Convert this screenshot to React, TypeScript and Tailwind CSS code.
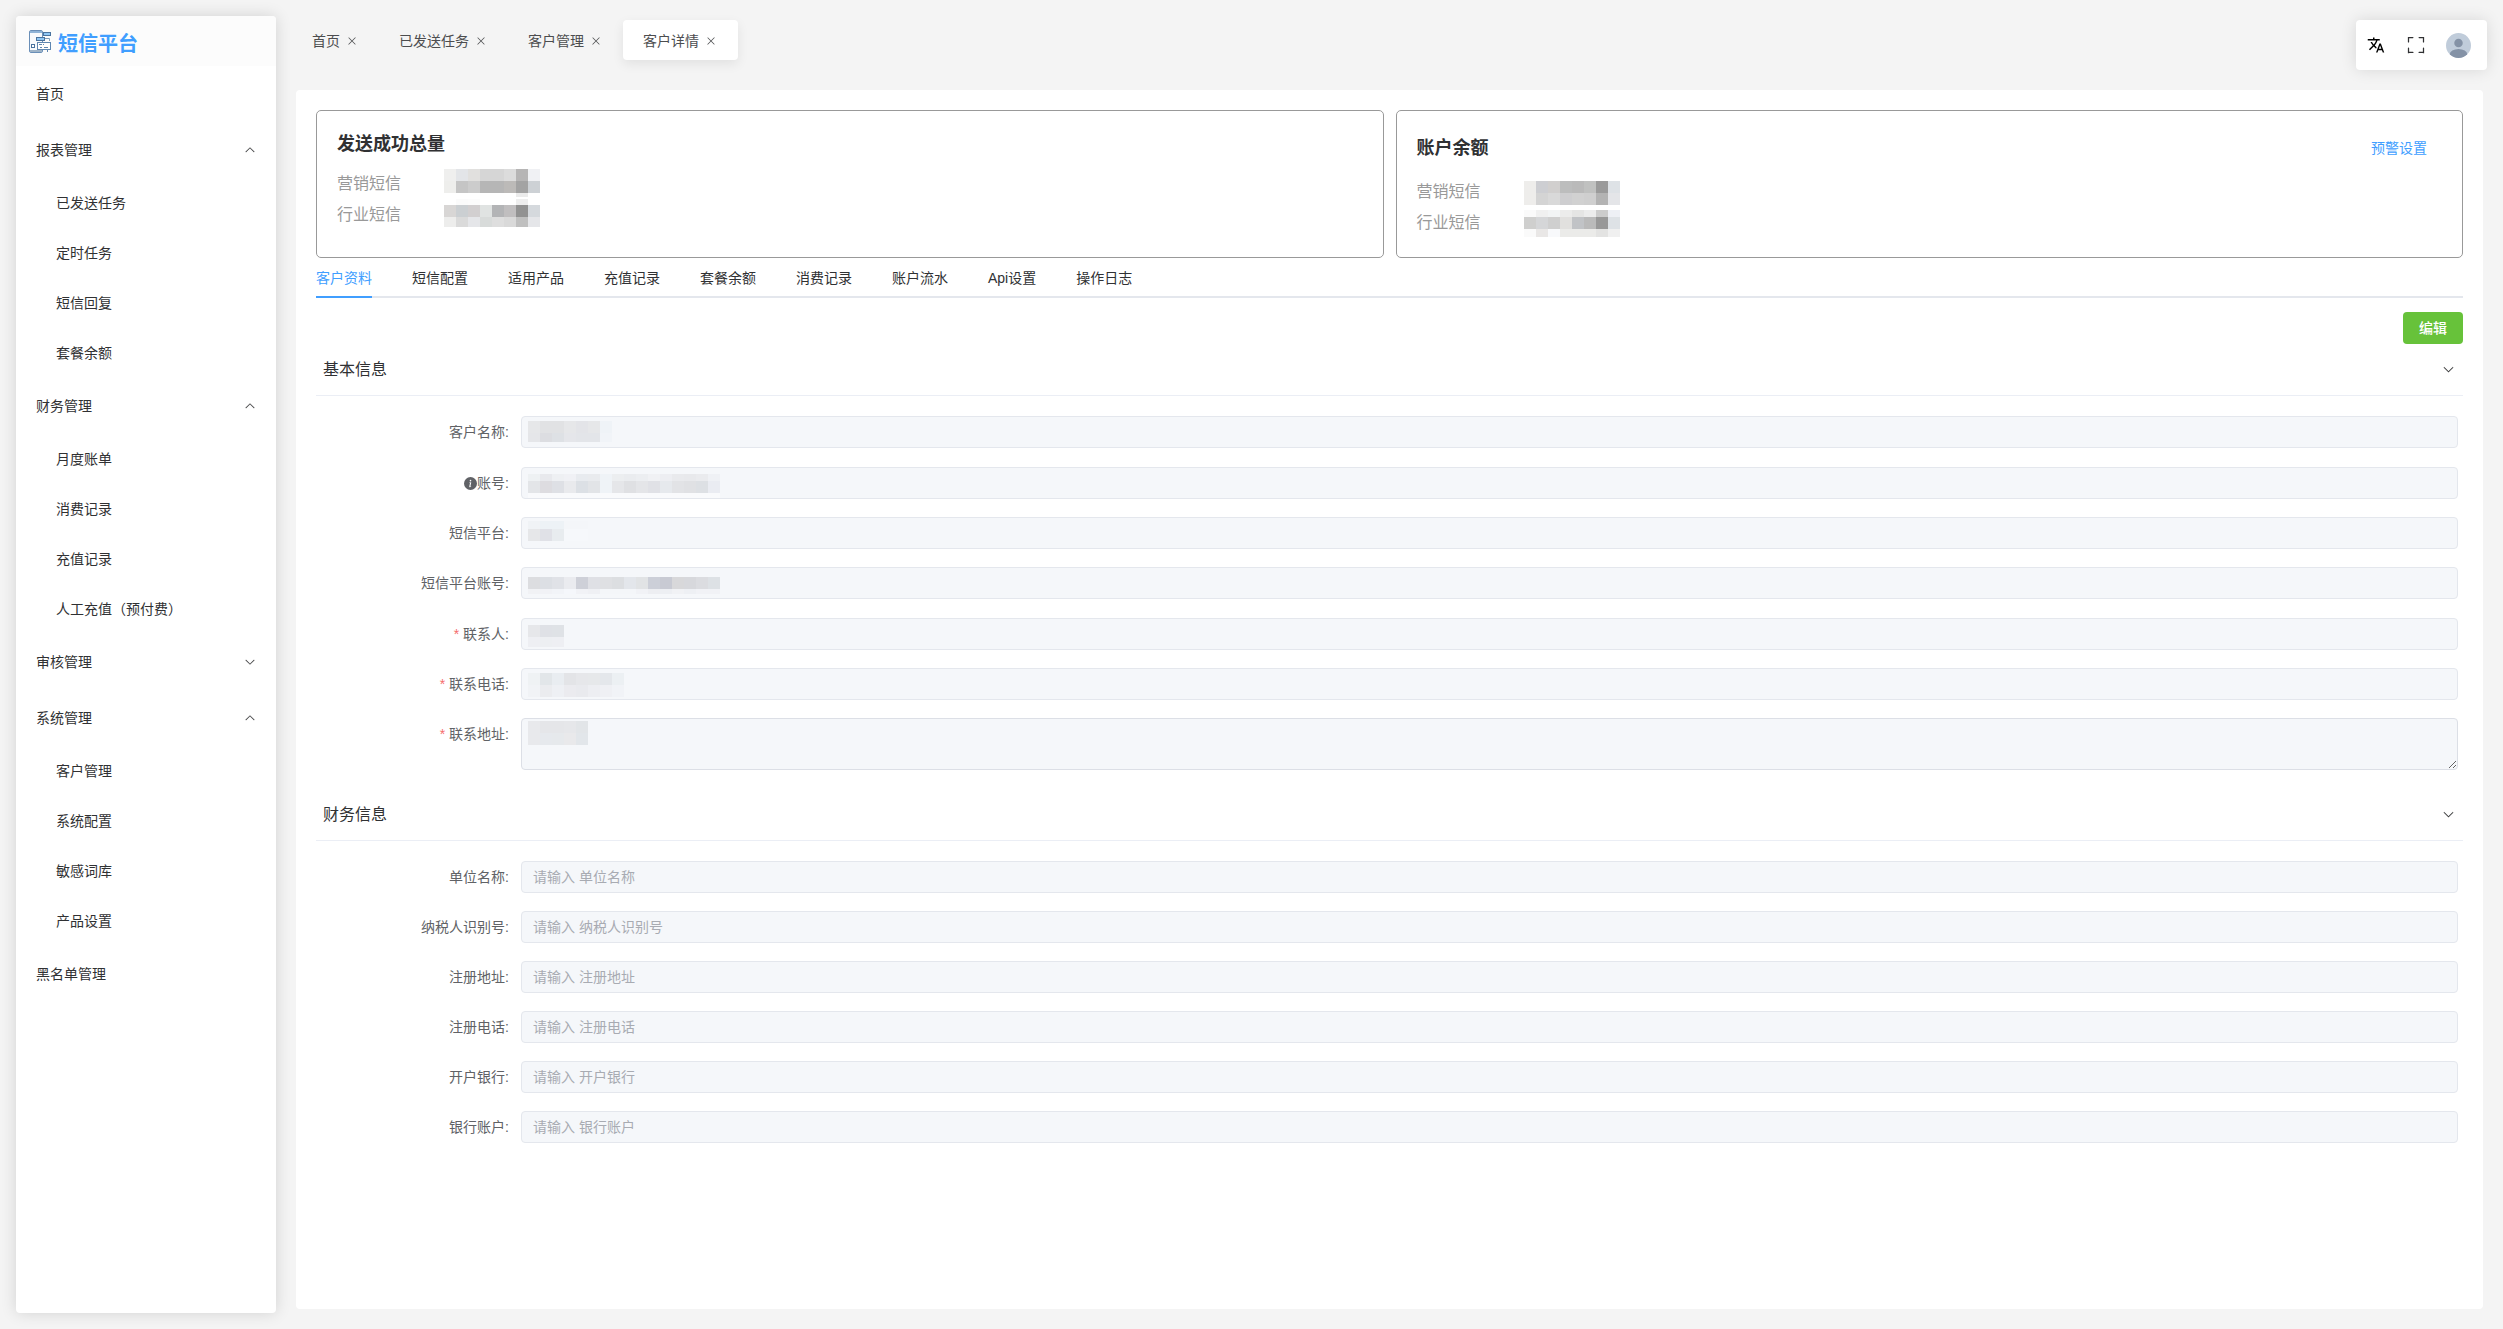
import React, { useState } from 'react';
import clsx from 'clsx';
import { BsInfoCircleFill } from 'react-icons/bs';
import { MdTranslate } from 'react-icons/md';

// --- DATA ---

type MenuItem = {
  label: string;
  open?: boolean;
  children?: string[];
};

const menu: MenuItem[] = [
  { label: '首页' },
  {
    label: '报表管理',
    open: true,
    children: ['已发送任务', '定时任务', '短信回复', '套餐余额'],
  },
  {
    label: '财务管理',
    open: true,
    children: ['月度账单', '消费记录', '充值记录', '人工充值（预付费）'],
  },
  { label: '审核管理', open: false, children: [] },
  {
    label: '系统管理',
    open: true,
    children: ['客户管理', '系统配置', '敏感词库', '产品设置'],
  },
  { label: '黑名单管理' },
];

const pageTabs = ['首页', '已发送任务', '客户管理', '客户详情'];

const detailTabs = [
  '客户资料',
  '短信配置',
  '适用产品',
  '充值记录',
  '套餐余额',
  '消费记录',
  '账户流水',
  'Api设置',
  '操作日志',
];

// Masked values: each row is [height, ...cell colours], cells are 12px wide
type MaskRow = [number, ...string[]];

const sentMarketing: MaskRow[] = [
  [1, 'none'],
  [12, '#efefee', '#e3e5e8', '#e1e0de', '#d6d6d6', '#d6d6d6', '#dcdcdc', '#b6b5b5', '#f0f1f4'],
  [12, '#eeeeec', '#c5c5c5', '#cccccc', '#b6b6b6', '#b6b6b6', '#bcbab8', '#a3a3a3', '#cdd1d5'],
  [4, 'none', 'none', 'none', 'none', 'none', 'none', '#ebebeb', 'none'],
];

const sentIndustry: MaskRow[] = [
  [6, 'none', '#fbfbfb', '#fcfcfc', 'none', 'none', 'none', '#eeeeee', 'none'],
  [12, '#d8d6d5', '#cbcfd2', '#d2cfd0', '#e0e3e2', '#b3b4b6', '#c0bebf', '#929292', '#d5d9dd'],
  [10, '#ededec', '#dadada', '#e5e6e9', '#d8dbda', '#dedede', '#d9d9d9', '#bfbfbf', '#e5e6e9'],
];

const balanceMarketing: MaskRow[] = [
  [5, 'none'],
  [12, '#eeedeb', '#cdced2', '#d1cfce', '#bcbdbd', '#bababa', '#c0c1c0', '#9a9a9a', '#dee2e6'],
  [12, '#eeedeb', '#d4d4d4', '#d9d9d9', '#ceced0', '#d1d1d1', '#cfcfcf', '#b3b3b3', '#e4e5e8'],
];

const balanceIndustry: MaskRow[] = [
  [3, 'none'],
  [7, '#fafafa', '#f0f0f0', '#f2f4f5', '#ececeb', '#e5e5e4', '#ececec', '#cccccc', '#eef0f5'],
  [12, '#cfcfce', '#d5d6d8', '#cfcfcf', '#e1e0de', '#c1c3c6', '#bababa', '#989898', '#dee2e6'],
  [8, '#fafafa', '#e9e7e6', '#f8f9fb', '#ebebe9', '#ebebe9', '#ebebe9', '#e3e3e2', '#f0f0f0'],
];

type Field = {
  id: string;
  label: string;
  required?: boolean;
  info?: boolean;
  multiline?: boolean;
  mask?: MaskRow[];
};

const basicGroups: Field[][] = [
  [
    {
      id: 'customer-name',
      label: '客户名称',
      mask: [
        [5, 'none'],
        [12, '#e6e7e9', '#e1e2e4', '#e1e2e4', '#e6e7e9', '#e3e4e8', '#e6e7e9', '#eff3f7'],
        [9, '#e5e6e9', '#dcdde1', '#dee1e5', '#e5e6ea', '#e3e5e9', '#e3e5e9', '#f1f4f8'],
      ],
    },
  ],
  [
    {
      id: 'account',
      label: '账号',
      info: true,
      mask: [
        [7, 'none'],
        [7, '#eef1f3', '#e8e9ed', '#eef0f3', '#f0f1f5', '#e8ebef', '#e9ebee', '#eff3f7', '#eceef0', '#eaecef', '#eceef1', '#f0f1f4', '#edeef2', '#e9eaed', '#e8e9ec', '#eaebee', '#eff1f5'],
        [12, '#e3e5e8', '#dddce0', '#dee0e5', '#e9eaed', '#dce0e5', '#e2e4e7', '#eff3f7', '#e5e6e9', '#dfe0e3', '#e4e5e8', '#e0e1e6', '#e6e9ed', '#e2e3e6', '#e0e1e4', '#dde0e4', '#eaecf2'],
        [5, '#f9fafc', '#f9fafc', '#f9fafc', '#f9fafc', '#f9fafc', '#f9fafc', '#f9fafc', '#f9fafc', '#f9fafc', '#f9fafc', '#f9fafc', '#f9fafc', '#f9fafc', '#f9fafc', '#f9fafc', '#f9fafc'],
      ],
    },
    {
      id: 'platform',
      label: '短信平台',
      mask: [
        [4, 'none'],
        [8, '#f0f3f6', '#edf2f6', '#edf2f6', '#f4f6f9', '#f4f6f9'],
        [12, '#e6e7e9', '#e0e1e7', '#e8ecef', '#f6f8fb', '#f6f8fb'],
      ],
    },
    {
      id: 'platform-account',
      label: '短信平台账号',
      mask: [
        [10, 'none'],
        [12, '#dcdde0', '#dcdfe4', '#e0e2e7', '#eaebef', '#ced0d8', '#dfe0e5', '#dfe0e3', '#dcdee1', '#e3e6eb', '#e1e3e5', '#cccfd8', '#c8cad3', '#d8d8da', '#d7d8dc', '#dbdce0', '#dde1e5'],
        [5, '#f1f2f5', '#f1f2f6', '#f2f4f8', '#f5f7fb', '#f1f2f6', '#eff0f4', '#f4f6f9', '#f4f6f9', '#f4f6f9', '#f1f2f6', '#edeef2', '#edeff3', '#f1f2f5', '#eef0f4', '#f1f2f6', '#f1f2f6'],
      ],
    },
  ],
  [
    {
      id: 'contact',
      label: '联系人',
      required: true,
      mask: [
        [7, 'none'],
        [12, '#e6e7ea', '#dfe1e6', '#dfe2e6'],
        [10, '#eeeff3', '#edeff2', '#eeeff3'],
      ],
    },
    {
      id: 'phone',
      label: '联系电话',
      required: true,
      mask: [
        [5, 'none'],
        [12, '#eff2f4', '#e2e6e9', '#e9edf1', '#e3e4e7', '#e6e7ea', '#e6e8ea', '#e4e7eb', '#ecf0f3'],
        [12, '#f1f3f6', '#ebecef', '#eef0f4', '#ebebef', '#e9eaee', '#edeef2', '#eff0f4', '#f1f3f7'],
      ],
    },
    {
      id: 'address',
      label: '联系地址',
      required: true,
      multiline: true,
      mask: [
        [3, 'none'],
        [12, '#e8e9ec', '#e5e6e9', '#e5e6e9', '#e6e7ea', '#e2e5e8'],
        [12, '#e8e9ec', '#e6e9ed', '#e6e9ec', '#e9e9eb', '#e2e6ea'],
      ],
    },
  ],
];

const financeGroups: Field[][] = [
  [
    { id: 'company', label: '单位名称' },
    { id: 'tax-no', label: '纳税人识别号' },
    { id: 'reg-address', label: '注册地址' },
    { id: 'reg-phone', label: '注册电话' },
    { id: 'bank', label: '开户银行' },
    { id: 'bank-account', label: '银行账户' },
  ],
];

// --- ICONS ---

const CloseIcon = () => (
  <svg viewBox="0 0 1024 1024" className="h-3 w-3 shrink-0" fill="currentColor">
    <path d="M764.288 214.592 512 466.88 259.712 214.592a31.936 31.936 0 0 0-45.12 45.12L466.752 512 214.528 764.224a31.936 31.936 0 1 0 45.12 45.184L512 557.184l252.288 252.288a31.936 31.936 0 0 0 45.12-45.12L557.12 512.064l252.288-252.352a31.936 31.936 0 1 0-45.12-45.184z" />
  </svg>
);

const ArrowIcon = ({ className }: { className?: string }) => (
  <svg
    viewBox="0 0 1024 1024"
    className={clsx('shrink-0', className)}
    fill="currentColor"
    stroke="currentColor"
    strokeWidth="16"
  >
    <path d="M831.872 340.864 512 652.672 192.128 340.864a30.592 30.592 0 0 0-42.752 0 29.12 29.12 0 0 0 0 41.6L489.664 714.24a32 32 0 0 0 44.672 0l340.288-331.712a29.12 29.12 0 0 0 0-41.728 30.592 30.592 0 0 0-42.752 0z" />
  </svg>
);

const FullScreenIcon = () => (
  <svg viewBox="0 0 1024 1024" className="h-5 w-5" fill="currentColor">
    <path d="m160 96.064 192 .192a32 32 0 0 1 0 64l-192-.192V352a32 32 0 0 1-64 0V96h64zm0 831.872V928H96V672a32 32 0 1 1 64 0v191.936l192-.192a32 32 0 1 1 0 64zM864 96.064V96h64v256a32 32 0 1 1-64 0V160.064l-192 .192a32 32 0 1 1 0-64l192-.192zm0 831.872-192-.192a32 32 0 0 1 0-64l192 .192V672a32 32 0 1 1 64 0v256h-64z" />
  </svg>
);

const AvatarIcon = () => (
  <svg viewBox="0 0 50 50" className="h-[25px] w-[25px]">
    <defs>
      <clipPath id="avatar-clip">
        <circle cx="25" cy="25" r="25" />
      </clipPath>
    </defs>
    <g clipPath="url(#avatar-clip)">
      <rect width="50" height="50" fill="#c0ccda" />
      <circle cx="25" cy="20" r="8.5" fill="#8492a6" />
      <ellipse cx="25" cy="43" rx="17.5" ry="11" fill="#8492a6" />
    </g>
  </svg>
);

// Phone with message bubbles in front of it
const LogoIcon = () => (
  <svg viewBox="0 0 22 23" className="h-[23px] w-[22px]" fill="none">
    <rect x="0.5" y="0.5" width="13" height="22" rx="1.5" fill="#f7fafd" stroke="#6a8fb8" />
    <rect x="1" y="1" width="12" height="2" fill="#8fb4d8" />
    <rect x="1" y="20" width="12" height="2" fill="#9fb4c8" />
    <rect x="14.5" y="2.5" width="7" height="3" fill="#8fc6f3" stroke="#4a739f" />
    <rect x="7.5" y="7.5" width="8" height="3" fill="#8fc6f3" stroke="#4a739f" />
    <path d="M16 8.5h4.500v2.500" stroke="#7f9cba" />
    <rect x="2.5" y="14.5" width="3" height="3" fill="#fff" stroke="#4a739f" />
    <rect x="8.5" y="12.5" width="13" height="7" fill="#fff" stroke="#5f86b0" />
    <path d="M18.500 19.500v2.500" stroke="#5f86b0" />
    <path d="M10 14.500h3M14 14.500h1M11 17.500h2M15 17.500h4" stroke="#5f86b0" />
  </svg>
);

const MaskedValue = ({ rows }: { rows: MaskRow[] }) => {
  const cells = Math.max(...rows.map(row => row.length - 1));
  const height = rows.reduce((sum, row) => sum + row[0], 0);
  let top = 0;

  return (
    <svg width={cells * 12} height={height} shapeRendering="crispEdges" aria-hidden="true">
      {rows.map(([rowHeight, ...colors], r) => {
        const y = top;
        top += rowHeight;
        return colors.map((color, c) => (
          <rect key={`${r}-${c}`} x={c * 12} y={y} width="12" height={rowHeight} fill={color} />
        ));
      })}
    </svg>
  );
};

// --- SIDEBAR ---

const Sidebar = () => {
  const [opened, setOpened] = useState<string[]>(
    menu.filter(item => item.open).map(item => item.label)
  );

  const toggle = (label: string) =>
    setOpened(prev =>
      prev.includes(label) ? prev.filter(l => l !== label) : [...prev, label]
    );

  return (
    <aside className="m-4 mr-0 w-[260px] shrink-0 overflow-hidden rounded bg-white shadow-[0_0_16px_rgba(0,0,0,0.14)]">
      <div className="flex h-[50px] items-center gap-[7px] bg-[#fcfcfc] pl-[13px]">
        <LogoIcon />
        <h1 className="pt-[6px] text-xl font-bold text-[#409eff]">短信平台</h1>
      </div>
      <nav className="text-sm text-[#303133]">
        <ul>
          {menu.map(item => {
            const isOpen = opened.includes(item.label);
            return (
              <li key={item.label}>
                {item.children ? (
                  <button
                    type="button"
                    aria-expanded={isOpen}
                    onClick={() => toggle(item.label)}
                    className="flex h-14 w-full items-center justify-between px-5 hover:text-[#409eff]"
                  >
                    {item.label}
                    <ArrowIcon className={clsx('h-3 w-3', isOpen && 'rotate-180')} />
                  </button>
                ) : (
                  <a href="#" className="flex h-14 items-center px-5 hover:text-[#409eff]">
                    {item.label}
                  </a>
                )}
                {item.children && isOpen && (
                  <ul>
                    {item.children.map(child => (
                      <li key={child}>
                        <a
                          href="#"
                          className="flex h-[50px] items-center pl-10 hover:text-[#409eff]"
                        >
                          {child}
                        </a>
                      </li>
                    ))}
                  </ul>
                )}
              </li>
            );
          })}
        </ul>
      </nav>
    </aside>
  );
};

// --- TOP BAR ---

const TopBar = () => {
  const [active, setActive] = useState('客户详情');

  return (
    <header className="flex items-start justify-between pr-4">
      <div className="flex text-sm text-[#4c4d4f]">
        {pageTabs.map(tab => (
          <div
            key={tab}
            className={clsx(
              'flex h-10 items-center rounded px-5 pt-[2px]',
              active === tab && 'bg-white shadow-[0_4px_12px_rgba(0,0,0,0.08)]'
            )}
          >
            <button type="button" onClick={() => setActive(tab)}>
              {tab}
            </button>
            <button
              type="button"
              aria-label={`关闭${tab}`}
              className="ml-[5px] flex w-[14px] justify-center"
            >
              <CloseIcon />
            </button>
          </div>
        ))}
      </div>
      <div className="flex h-[50px] items-center rounded bg-white text-[#303133] shadow-[0_0_16px_rgba(0,0,0,0.12)]">
        <button type="button" aria-label="切换语言" className="flex w-10 justify-center text-black">
          <MdTranslate className="h-[18px] w-[18px]" />
        </button>
        <button type="button" aria-label="全屏" className="flex w-10 justify-center">
          <FullScreenIcon />
        </button>
        <button type="button" aria-label="用户" className="mr-4 ml-[10px]">
          <AvatarIcon />
        </button>
      </div>
    </header>
  );
};

// --- STATISTICS ---

type StatCardProps = {
  title: string;
  marketing: MaskRow[];
  industry: MaskRow[];
  action?: string;
};

const StatCard = ({ title, marketing, industry, action }: StatCardProps) => (
  <section className="h-[148px] flex-1 rounded-[5px] border border-[#999] p-5">
    <div
      className={clsx(
        'flex items-center justify-between',
        action ? 'h-[33px]' : 'h-[25px]'
      )}
    >
      <h2 className="text-lg font-bold text-[#303133]">{title}</h2>
      {action && (
        <button type="button" className="px-[15px] text-sm text-[#409eff]">
          {action}
        </button>
      )}
    </div>
    <dl className="mt-3 text-base text-[#999]">
      <div className="flex h-[31px]">
        <dt className="w-[107px] leading-[31px]">营销短信</dt>
        <dd>
          <MaskedValue rows={marketing} />
        </dd>
      </div>
      <div className="flex h-[31px]">
        <dt className="w-[107px] leading-[31px]">行业短信</dt>
        <dd>
          <MaskedValue rows={industry} />
        </dd>
      </div>
    </dl>
  </section>
);

// --- DETAIL FORM ---

const DetailTabs = () => {
  const [active, setActive] = useState('客户资料');

  return (
    <div role="tablist" className="flex gap-10 text-sm shadow-[inset_0_-2px_0_#e4e7ed]">
      {detailTabs.map(tab => (
        <button
          key={tab}
          type="button"
          role="tab"
          aria-selected={active === tab}
          onClick={() => setActive(tab)}
          className={clsx(
            'h-10 border-b-2 pt-[2px]',
            active === tab
              ? 'border-[#409eff] text-[#409eff]'
              : 'border-transparent text-[#303133]'
          )}
        >
          {tab}
        </button>
      ))}
    </div>
  );
};

const FormField = ({ field }: { field: Field }) => {
  const placeholder = field.mask ? undefined : `请输入 ${field.label}`;

  return (
    <div className="flex">
      <label
        htmlFor={field.id}
        className="flex h-8 w-[200px] shrink-0 items-center justify-end pr-3 text-sm text-[#606266]"
      >
        {field.required && <span className="mr-1 text-[#f56c6c]">*</span>}
        {field.info && <BsInfoCircleFill className="h-[13px] w-[13px]" />}
        {field.label}:
      </label>
      <div className="relative flex-1">
        {field.multiline ? (
          <textarea
            id={field.id}
            rows={2}
            readOnly
            className="block h-[52px] w-full resize-y rounded border border-[#dcdfe6] bg-[#f5f7fa] px-[11px] py-[5px] text-sm text-[#a8abb2] outline-none"
          />
        ) : (
          <input
            id={field.id}
            type="text"
            readOnly
            placeholder={placeholder}
            className="block h-8 w-full rounded border border-[#e4e7ed] bg-[#f5f7fa] px-[11px] text-sm text-[#a8abb2] outline-none placeholder:text-[#a8abb2]"
          />
        )}
        {field.mask && (
          <div className="pointer-events-none absolute top-0 left-[7px]">
            <MaskedValue rows={field.mask} />
          </div>
        )}
      </div>
    </div>
  );
};

const FormSection = ({ title, groups }: { title: string; groups: Field[][] }) => {
  const [open, setOpen] = useState(true);

  return (
    <section>
      <h3>
        <button
          type="button"
          aria-expanded={open}
          onClick={() => setOpen(!open)}
          className="flex h-[52px] w-full items-center justify-between border-b border-[#ebeef5] pr-2 pl-[7px] text-base text-[#303133]"
        >
          {title}
          <ArrowIcon className="h-[13px] w-[13px]" />
        </button>
      </h3>
      {open && (
        <div className="flex flex-col gap-[19px] px-[5px] pt-5 pb-[19px]">
          {groups.map(group => (
            <div key={group[0].id} className="flex flex-col gap-[18px]">
              {group.map(field => (
                <FormField key={field.id} field={field} />
              ))}
            </div>
          ))}
        </div>
      )}
    </section>
  );
};

// --- PAGE ---

export default function App() {
  return (
    <div className="flex min-h-screen bg-[#f4f4f4] font-['Liberation_Sans','Noto_Sans_CJK_SC',sans-serif]">
      <Sidebar />
      <div className="flex min-w-0 flex-1 flex-col gap-5 py-5 pl-4">
        <TopBar />
        <main className="mr-5 ml-1 flex-1 rounded bg-white p-5">
          <div className="flex gap-3">
            <StatCard
              title="发送成功总量"
              marketing={sentMarketing}
              industry={sentIndustry}
            />
            <StatCard
              title="账户余额"
              marketing={balanceMarketing}
              industry={balanceIndustry}
              action="预警设置"
            />
          </div>
          <DetailTabs />
          <div className="flex justify-end pt-[14px]">
            <button
              type="button"
              className="h-8 w-[60px] rounded bg-[#67c23a] text-sm font-medium text-white hover:bg-[#95d475]"
            >
              编辑
            </button>
          </div>
          <form onSubmit={e => e.preventDefault()}>
            <FormSection title="基本信息" groups={basicGroups} />
            <FormSection title="财务信息" groups={financeGroups} />
          </form>
        </main>
      </div>
    </div>
  );
}
